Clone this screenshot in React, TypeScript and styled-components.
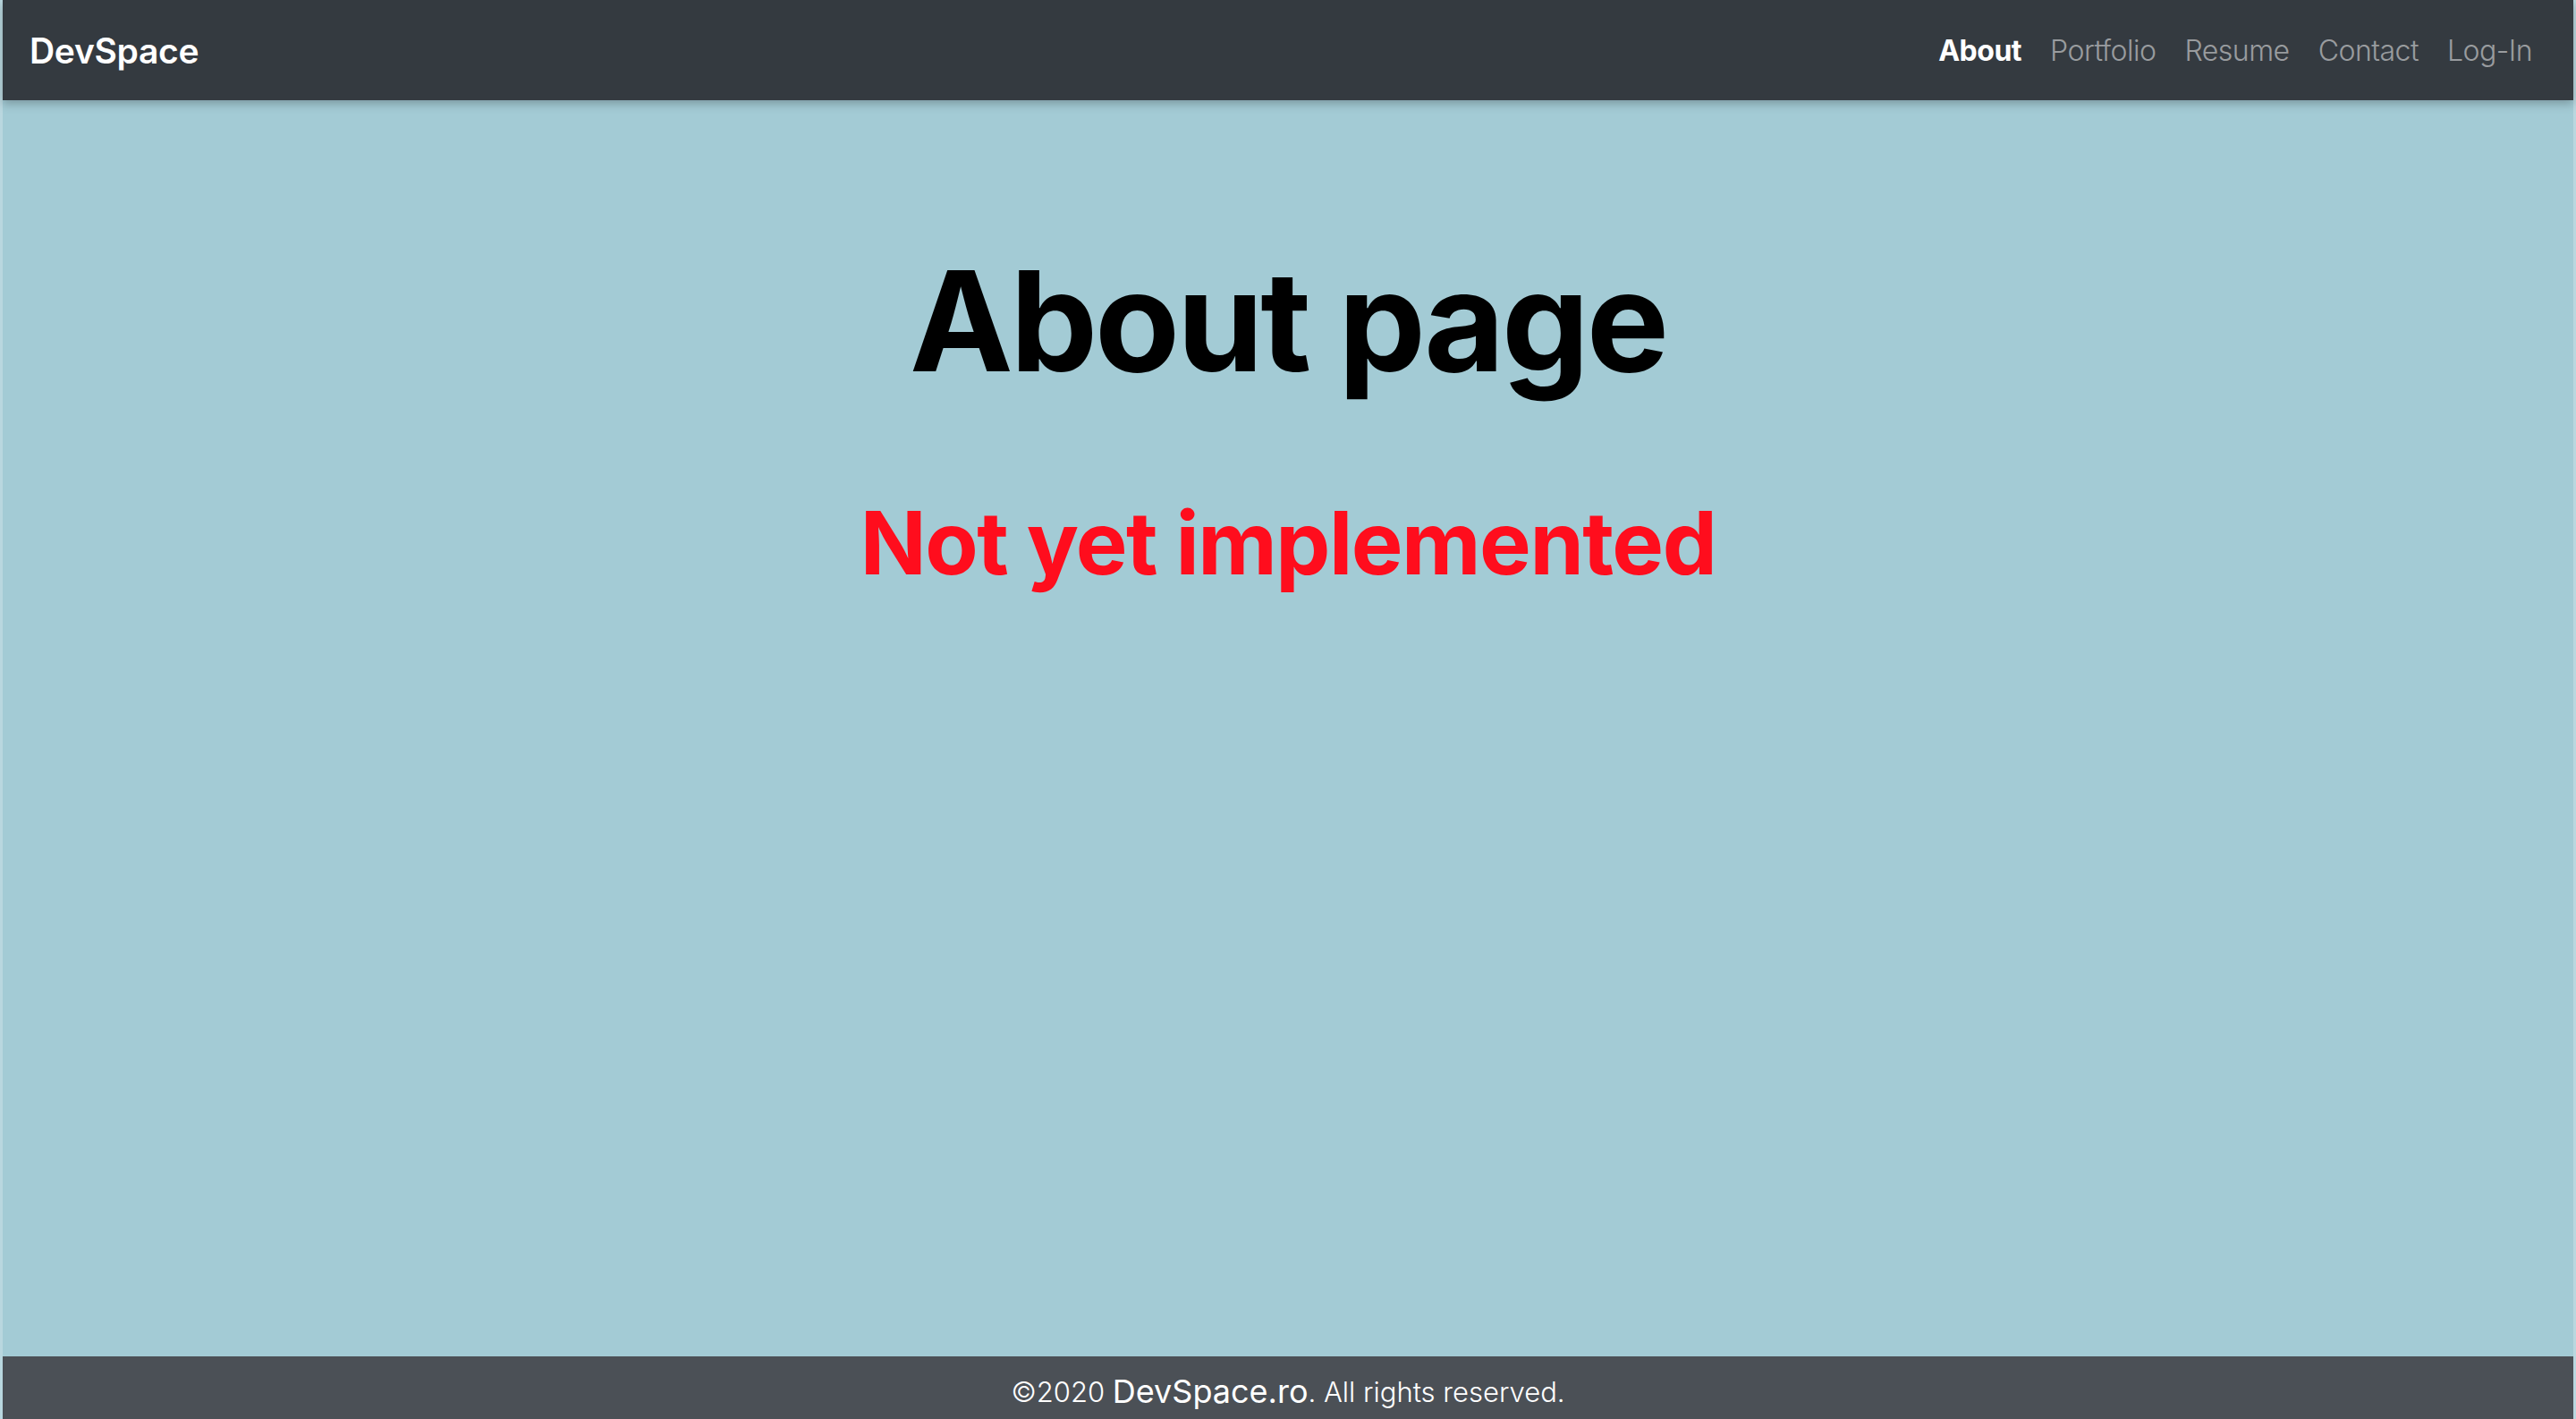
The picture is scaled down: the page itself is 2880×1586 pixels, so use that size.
import React from 'react';
import styled, { createGlobalStyle } from 'styled-components';

const GlobalStyle = createGlobalStyle`
  html, body {
    margin: 0;
    padding: 0;
    height: 100%;
  }
  body {
    font-family: Inter, "Noto Sans", sans-serif;
    background: #a3cbd5;
  }
  #root {
    min-height: 100vh;
  }
`;

const Page = styled.div`
  display: flex;
  flex-direction: column;
  min-height: 100vh;
  background: #a3cbd5;
  border-left: 3px solid #b9d7df;
  border-right: 3px solid #b9d7df;
  box-sizing: border-box;
`;

const NavBar = styled.nav`
  display: flex;
  align-items: center;
  justify-content: space-between;
  height: 112px;
  padding: 0 30px 0 30px;
  background: #343a40;
  box-shadow: 0 4px 10px rgba(0, 0, 0, 0.25);
  position: relative;
  z-index: 1;
`;

const Brand = styled.a`
  color: #fff;
  font-size: 39px;
  font-weight: 600;
  text-decoration: none;
  letter-spacing: -0.3px;
`;

const NavList = styled.ul`
  display: flex;
  list-style: none;
  margin: 0;
  padding: 0;
  gap: 0;
`;

const NavLink = styled.a<{ $active?: boolean }>`
  display: block;
  padding: 0 16px;
  font-size: 32px;
  font-weight: ${(p) => (p.$active ? 700 : 300)};
  color: ${(p) => (p.$active ? '#fff' : 'rgba(255,255,255,0.5)')};
  text-decoration: none;
  letter-spacing: -0.5px;
`;

const Main = styled.main`
  flex: 1;
  display: flex;
  flex-direction: column;
  align-items: center;
  padding-top: 169px;
`;

const Title = styled.h1`
  margin: 0;
  font-size: 155px;
  font-weight: 700;
  line-height: 1;
  color: #000;
  letter-spacing: -3.2px;
`;

const Notice = styled.h2`
  margin: 122px 0 0;
  font-size: 97px;
  font-weight: 700;
  line-height: 1;
  color: #ff0d1d;
  letter-spacing: -1.5px;
`;

const Footer = styled.footer`
  height: 70px;
  box-sizing: border-box;
  padding-top: 8px;
  display: flex;
  align-items: center;
  justify-content: center;
  background: #4b5056;
  color: #fff;
  font-size: 31px;
  font-weight: 300;
`;

const Site = styled.span`
  font-size: 36px;
  font-weight: 400;
`;

const links = ['About', 'Portfolio', 'Resume', 'Contact', 'Log-In'];

export default function App() {
  return (
    <>
      <GlobalStyle />
      <Page>
        <NavBar>
          <Brand href="#">DevSpace</Brand>
          <NavList>
            {links.map((l) => (
              <li key={l}>
                <NavLink href="#" $active={l === 'About'}>
                  {l}
                </NavLink>
              </li>
            ))}
          </NavList>
        </NavBar>
        <Main>
          <Title>About page</Title>
          <Notice>Not yet implemented</Notice>
        </Main>
        <Footer>
          ©2020&nbsp;<Site>DevSpace.ro</Site>. All rights reserved.
        </Footer>
      </Page>
    </>
  );
}
